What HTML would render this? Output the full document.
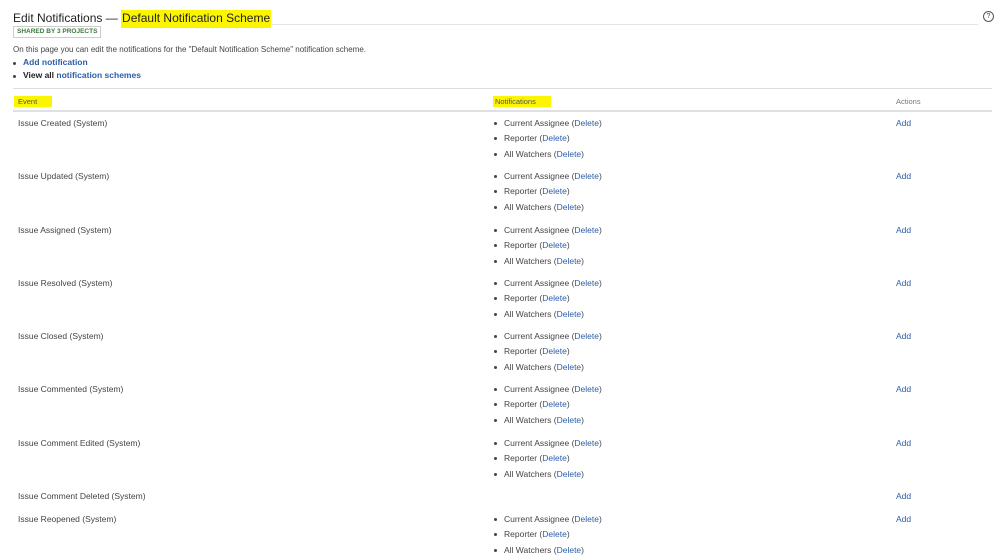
<!DOCTYPE html>
<html><head><style>
body{margin:0;width:999px;height:535px;overflow:hidden;background:#fff;font-family:"Liberation Sans",sans-serif;color:#444;position:relative}
.a{position:absolute;white-space:nowrap;font-size:8.5px}
.hl{background:#fcf500}
a{color:#2a5ea8;text-decoration:none}
.b{position:absolute;width:3px;height:3px;border-radius:50%;background:#444}
</style></head><body>
<div class="a" style="left:13px;top:11px;font-size:12px;color:#222">Edit Notifications — <span class="hl" style="padding:1px 1px 3px">Default Notification Scheme</span></div>
<div class="a" style="left:272px;top:24px;width:706px;height:1px;background:#e4e4e4"></div>
<div class="a" style="left:983px;top:11px;width:9px;height:9px;border:1px solid #555;border-radius:50%;font-size:7px;text-align:center;line-height:9px">?</div>
<div class="a" style="left:13px;top:26px;border:1px solid #ccc;padding:1px 3px;font-size:6.5px;font-weight:bold;color:#3b7a3b;line-height:8px">SHARED BY 3 PROJECTS</div>
<div class="a" style="left:13px;top:45px;font-size:8px">On this page you can edit the notifications for the "Default Notification Scheme" notification scheme.</div>
<div class="b" style="left:13px;top:62px"></div>
<div class="a" style="left:23px;top:57px;font-weight:bold"><a>Add notification</a></div>
<div class="b" style="left:13px;top:75px"></div>
<div class="a" style="left:23px;top:70px;font-weight:bold;color:#222">View all <a>notification schemes</a></div>
<div class="a" style="left:13px;top:88px;width:979px;height:1px;background:#ddd"></div>
<div class="a hl" style="left:14px;top:96px;width:38px;height:11px"></div>
<div class="a" style="left:18px;top:97px;font-size:7.5px;color:#555">Event</div>
<div class="a hl" style="left:493px;top:96px;width:58px;height:11px"></div>
<div class="a" style="left:495px;top:97px;font-size:7.5px;color:#555">Notifications</div>
<div class="a" style="left:896px;top:97px;font-size:7.5px;color:#777">Actions</div>
<div class="a" style="left:13px;top:110px;width:979px;height:2px;background:#e0e0e0"></div>
<div id="rows"></div>
<script>
var ev=["Issue Created","Issue Updated","Issue Assigned","Issue Resolved","Issue Closed","Issue Commented","Issue Comment Edited","Issue Comment Deleted","Issue Reopened"];
var tops=[118,171,225,278,331,384,438,491,514];
var h="";
ev.forEach(function(e,i){var t=tops[i];
h+='<div class="a" style="left:18px;top:'+t+'px">'+e+' (System)</div>';
h+='<div class="a" style="left:896px;top:'+t+'px"><a>Add</a></div>';
if(i!=7){["Current Assignee","Reporter","All Watchers"].forEach(function(n,j){var y=t+j*15.3;
h+='<div class="b" style="left:494px;top:'+(y+4)+'px"></div><div class="a" style="left:504px;top:'+y+'px">'+n+' (<a>Delete</a>)</div>';});}
});
document.getElementById("rows").innerHTML=h;
</script>
</body></html>
